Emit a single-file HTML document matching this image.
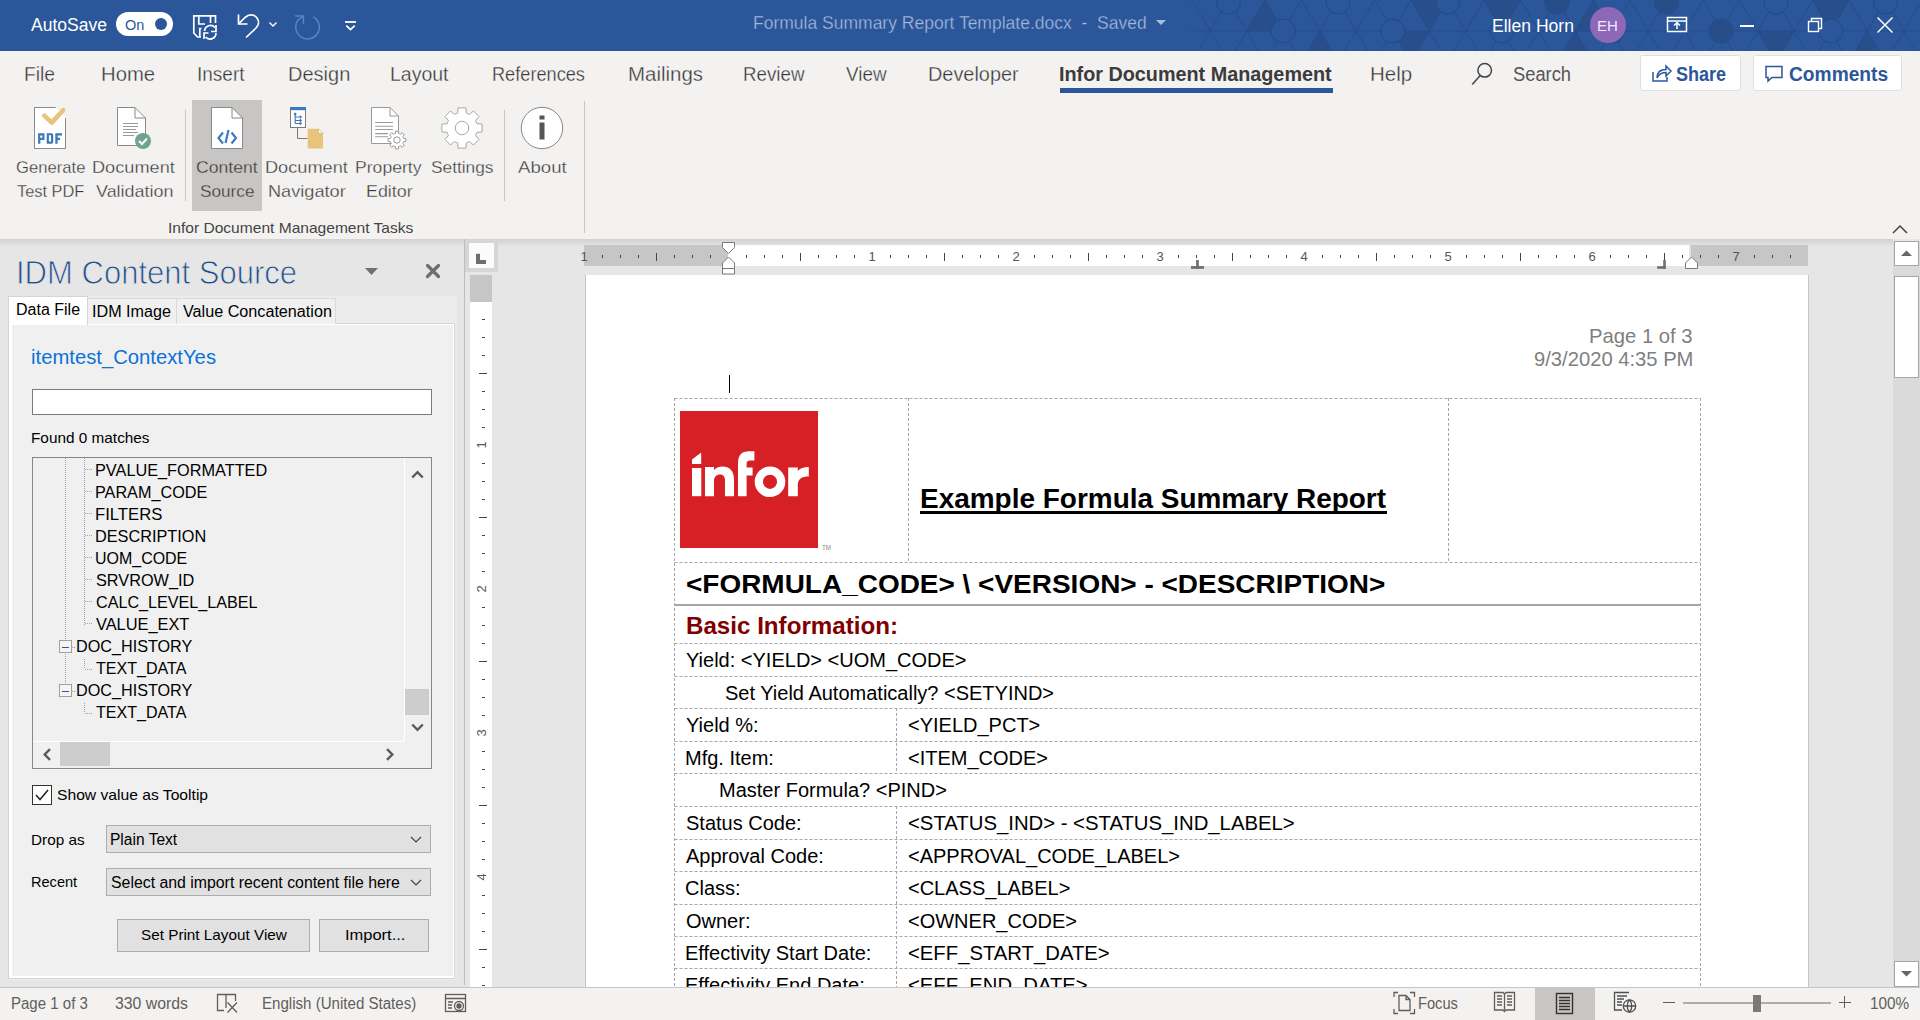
<!DOCTYPE html>
<html><head><meta charset="utf-8"><style>
html,body{margin:0;padding:0;width:1920px;height:1020px;overflow:hidden;background:#e6e6e6;font-family:'Liberation Sans',sans-serif}
.t{position:absolute;white-space:pre;line-height:1;transform-origin:0 0}
svg{overflow:visible}
</style></head><body>
<div style="position:absolute;left:0px;top:0px;width:1920px;height:51px;background:#2b579a"></div><svg style="position:absolute;left:0px;top:0px;overflow:hidden" width="1920" height="51" viewBox="0 0 1920 51"><defs><linearGradient id="fadeg" x1="0" x2="1"><stop offset="0" stop-color="#2b579a" stop-opacity="1"/><stop offset="1" stop-color="#2b579a" stop-opacity="0"/></linearGradient></defs><g fill="#284f8b"><polygon points="1246.8,31 1283.2,31 1265.0,0"/><polygon points="1301.5,62 1338.0,62 1319.8,31"/><polygon points="1392.8,31 1429.2,31 1411.0,62"/><polygon points="1411.0,0 1447.5,0 1429.2,31"/><polygon points="1484.0,0 1520.5,0 1502.2,31"/><polygon points="1757.8,31 1794.2,31 1776.0,62"/><polygon points="1812.5,0 1849.0,0 1830.8,31"/><polygon points="1849.0,62 1885.5,62 1867.2,31"/><polygon points="1575.2,31 1611.8,31 1593.5,0"/><polygon points="1557.0,62 1593.5,62 1575.2,31"/></g><path d="M1119.0 0 L1137.2 31 M1119.0 0 L1100.8 31 M1137.2 31 L1119.0 62 M1137.2 31 L1155.5 62 M1155.5 0 L1173.8 31 M1155.5 0 L1137.2 31 M1173.8 31 L1155.5 62 M1173.8 31 L1192.0 62 M1192.0 0 L1210.2 31 M1192.0 0 L1173.8 31 M1210.2 31 L1192.0 62 M1210.2 31 L1228.5 62 M1228.5 0 L1246.8 31 M1228.5 0 L1210.2 31 M1246.8 31 L1228.5 62 M1246.8 31 L1265.0 62 M1265.0 0 L1283.2 31 M1265.0 0 L1246.8 31 M1283.2 31 L1265.0 62 M1283.2 31 L1301.5 62 M1301.5 0 L1319.8 31 M1301.5 0 L1283.2 31 M1319.8 31 L1301.5 62 M1319.8 31 L1338.0 62 M1338.0 0 L1356.2 31 M1338.0 0 L1319.8 31 M1356.2 31 L1338.0 62 M1356.2 31 L1374.5 62 M1374.5 0 L1392.8 31 M1374.5 0 L1356.2 31 M1392.8 31 L1374.5 62 M1392.8 31 L1411.0 62 M1411.0 0 L1429.2 31 M1411.0 0 L1392.8 31 M1429.2 31 L1411.0 62 M1429.2 31 L1447.5 62 M1447.5 0 L1465.8 31 M1447.5 0 L1429.2 31 M1465.8 31 L1447.5 62 M1465.8 31 L1484.0 62 M1484.0 0 L1502.2 31 M1484.0 0 L1465.8 31 M1502.2 31 L1484.0 62 M1502.2 31 L1520.5 62 M1520.5 0 L1538.8 31 M1520.5 0 L1502.2 31 M1538.8 31 L1520.5 62 M1538.8 31 L1557.0 62 M1557.0 0 L1575.2 31 M1557.0 0 L1538.8 31 M1575.2 31 L1557.0 62 M1575.2 31 L1593.5 62 M1593.5 0 L1611.8 31 M1593.5 0 L1575.2 31 M1611.8 31 L1593.5 62 M1611.8 31 L1630.0 62 M1630.0 0 L1648.2 31 M1630.0 0 L1611.8 31 M1648.2 31 L1630.0 62 M1648.2 31 L1666.5 62 M1666.5 0 L1684.8 31 M1666.5 0 L1648.2 31 M1684.8 31 L1666.5 62 M1684.8 31 L1703.0 62 M1703.0 0 L1721.2 31 M1703.0 0 L1684.8 31 M1721.2 31 L1703.0 62 M1721.2 31 L1739.5 62 M1739.5 0 L1757.8 31 M1739.5 0 L1721.2 31 M1757.8 31 L1739.5 62 M1757.8 31 L1776.0 62 M1776.0 0 L1794.2 31 M1776.0 0 L1757.8 31 M1794.2 31 L1776.0 62 M1794.2 31 L1812.5 62 M1812.5 0 L1830.8 31 M1812.5 0 L1794.2 31 M1830.8 31 L1812.5 62 M1830.8 31 L1849.0 62 M1849.0 0 L1867.2 31 M1849.0 0 L1830.8 31 M1867.2 31 L1849.0 62 M1867.2 31 L1885.5 62 M1885.5 0 L1903.8 31 M1885.5 0 L1867.2 31 M1903.8 31 L1885.5 62 M1903.8 31 L1922.0 62 M1922.0 0 L1940.2 31 M1922.0 0 L1903.8 31 M1940.2 31 L1922.0 62 M1940.2 31 L1958.5 62 M1958.5 0 L1976.8 31 M1958.5 0 L1940.2 31 M1976.8 31 L1958.5 62 M1976.8 31 L1995.0 62 M1995.0 0 L2013.2 31 M1995.0 0 L1976.8 31 M2013.2 31 L1995.0 62 M2013.2 31 L2031.5 62 M2031.5 0 L2049.8 31 M2031.5 0 L2013.2 31 M2049.8 31 L2031.5 62 M2049.8 31 L2068.0 62 M1150 31 H1920" stroke="#244c8a" stroke-width="1" fill="none"/><g stroke="#244c8a" stroke-width="1"><circle cx="1228.5" cy="2" r="12" fill="#2b579a"/><circle cx="1228.5" cy="2" r="12" fill="none"/><circle cx="1283.2" cy="31" r="12" fill="#2b579a"/><circle cx="1283.2" cy="31" r="12" fill="none"/><circle cx="1338.0" cy="2" r="12" fill="#2b579a"/><circle cx="1338.0" cy="2" r="12" fill="none"/><circle cx="1392.8" cy="31" r="12" fill="#2b579a"/><circle cx="1392.8" cy="31" r="12" fill="none"/><circle cx="1447.5" cy="2" r="12" fill="#2b579a"/><circle cx="1447.5" cy="2" r="12" fill="none"/><circle cx="1502.2" cy="31" r="12" fill="#2b579a"/><circle cx="1502.2" cy="31" r="12" fill="none"/><circle cx="1557.0" cy="2" r="12" fill="#2b579a"/><circle cx="1557.0" cy="2" r="12" fill="none"/><circle cx="1611.8" cy="31" r="12" fill="#2b579a"/><circle cx="1611.8" cy="31" r="12" fill="none"/><circle cx="1666.5" cy="2" r="12" fill="#2b579a"/><circle cx="1666.5" cy="2" r="12" fill="none"/><circle cx="1721.2" cy="31" r="12" fill="#2b579a"/><circle cx="1721.2" cy="31" r="12" fill="none"/><circle cx="1776.0" cy="2" r="12" fill="#2b579a"/><circle cx="1776.0" cy="2" r="12" fill="none"/><circle cx="1830.8" cy="31" r="12" fill="#2b579a"/><circle cx="1830.8" cy="31" r="12" fill="none"/><circle cx="1885.5" cy="2" r="12" fill="#2b579a"/><circle cx="1885.5" cy="2" r="12" fill="none"/><circle cx="1940.2" cy="31" r="12" fill="#2b579a"/><circle cx="1940.2" cy="31" r="12" fill="none"/><circle cx="1995.0" cy="2" r="12" fill="#2b579a"/><circle cx="1995.0" cy="2" r="12" fill="none"/><circle cx="2049.8" cy="31" r="12" fill="#2b579a"/><circle cx="2049.8" cy="31" r="12" fill="none"/></g><circle cx="1557.0" cy="2" r="11" fill="#264d88"/><circle cx="1666.5" cy="2" r="11" fill="#264d88"/><circle cx="1721.2" cy="31" r="11" fill="#264d88"/><rect x="1180" y="0" width="25" height="51" fill="url(#fadeg)"/><rect x="0" y="0" width="1180" height="51" fill="#2b579a"/></svg><div class="t" style="left:31.00px;top:16px;font-size:18px;color:#ffffff;font-weight:400;font-family:'Liberation Sans';transform:scaleX(0.9738);">AutoSave</div><div style="position:absolute;left:116px;top:12px;width:57px;height:24px;background:#fff;border-radius:12px"></div><div class="t" style="left:125.00px;top:17px;font-size:15px;color:#2b579a;font-weight:400;font-family:'Liberation Sans';transform:scaleX(0.9661);">On</div><div style="position:absolute;left:155px;top:18px;width:12px;height:12px;border-radius:6px;background:#2b579a"></div><svg style="position:absolute;left:0px;top:0px;" width="300" height="50" viewBox="0 0 300 50"><g fill="none" stroke="#fff" stroke-width="1.7">
<path d="M215.5 23 V15.8 H193.8 V33 L197.5 37 H201"/>
<path d="M198.8 16 V24 H205"/><path d="M210.5 16 V23"/>
<path d="M199.8 37 V28.5 H201.5"/>
<path d="M204.5 31 A6 6 0 0 1 215 27.5"/><path d="M216 33 A6 6 0 0 1 205.5 37"/>
<path d="M216 25 V31.5 H211"/><path d="M204 39 V33 H208.5"/>
</g>
<g fill="none" stroke="#fff" stroke-width="1.7">
<path d="M238.5 14.5 V24 H247.5"/><path d="M238.8 23.7 L245 17.5 C249 14 254 14 257 18 C259.5 21.5 258.5 25.5 256 28 L246 37.5"/>
<path d="M269.5 22.5 L273 26 L276.5 22.5" stroke-width="1.4"/>
</g></svg><svg style="position:absolute;left:0px;top:0px;" width="400" height="50" viewBox="0 0 400 50"><g fill="none" stroke="#5b85c0" stroke-width="1.5"><path d="M313.3 16.8 A11.8 11.8 0 1 1 298.5 19.5"/><path d="M295 16 H303.4 V23.8"/><path d="M298.5 19.5 L303 16.5"/></g></svg><svg style="position:absolute;left:0px;top:0px;" width="400" height="50" viewBox="0 0 400 50"><g fill="none" stroke="#fff" stroke-width="1.8"><path d="M345 22 H356"/><path d="M346.3 25.6 L350.5 29.6 L354.7 25.6"/></g></svg><div class="t" style="left:753.03px;top:14px;font-size:18px;color:#a6bbdd;font-weight:400;font-family:'Liberation Sans';transform:scaleX(0.9724);-webkit-text-stroke:0.3px #2b579a;">Formula Summary Report Template.docx  -  Saved</div><svg style="position:absolute;left:1152px;top:16px;" width="16" height="12" viewBox="0 0 16 12"><polygon points="4,4 14,4 9,9" fill="#a9bddd"/></svg><div class="t" style="left:1492.02px;top:17px;font-size:18px;color:#ffffff;font-weight:400;font-family:'Liberation Sans';transform:scaleX(0.9752);">Ellen Horn</div><div style="position:absolute;left:1590px;top:7px;width:36px;height:36px;border-radius:18px;background:#8d67b8"></div><div class="t" style="left:1597.00px;top:18px;font-size:15px;color:#f3e8ff;font-weight:400;font-family:'Liberation Sans';">EH</div><svg style="position:absolute;left:1662px;top:12px;" width="30" height="26" viewBox="0 0 30 26"><g fill="none" stroke="#fff" stroke-width="1.5"><rect x="5.5" y="5.5" width="19" height="14"/><path d="M5.5 9 H24.5"/><path d="M15 17 V11 M12 13.5 L15 10.5 L18 13.5"/></g></svg><div style="position:absolute;left:1740px;top:25px;width:14px;height:1.5px;background:#fff"></div><svg style="position:absolute;left:1804px;top:14px;" width="24" height="22" viewBox="0 0 24 22"><g fill="none" stroke="#fff" stroke-width="1.4"><rect x="4.5" y="7.5" width="10" height="10"/><path d="M7.5 7.5 V4.5 H17.5 V14.5 H14.5"/></g></svg><svg style="position:absolute;left:1873px;top:13px;" width="24" height="24" viewBox="0 0 24 24"><g stroke="#fff" stroke-width="1.5"><path d="M4.5 4.5 L19.5 19.5 M19.5 4.5 L4.5 19.5"/></g></svg><div style="position:absolute;left:0px;top:51px;width:1920px;height:188px;background:#f3f2f1"></div><div class="t" style="left:24.04px;top:64px;font-size:20px;color:#383838;font-weight:400;font-family:'Liberation Sans';transform:scaleX(0.9645);-webkit-text-stroke:0.3px #f3f2f1;">File</div><div class="t" style="left:100.99px;top:64px;font-size:20px;color:#383838;font-weight:400;font-family:'Liberation Sans';transform:scaleX(1.0148);-webkit-text-stroke:0.3px #f3f2f1;">Home</div><div class="t" style="left:197.05px;top:64px;font-size:20px;color:#383838;font-weight:400;font-family:'Liberation Sans';transform:scaleX(0.9502);-webkit-text-stroke:0.3px #f3f2f1;">Insert</div><div class="t" style="left:288.00px;top:64px;font-size:20px;color:#383838;font-weight:400;font-family:'Liberation Sans';-webkit-text-stroke:0.3px #f3f2f1;">Design</div><div class="t" style="left:390.03px;top:64px;font-size:20px;color:#383838;font-weight:400;font-family:'Liberation Sans';transform:scaleX(0.9749);-webkit-text-stroke:0.3px #f3f2f1;">Layout</div><div class="t" style="left:492.09px;top:64px;font-size:20px;color:#383838;font-weight:400;font-family:'Liberation Sans';transform:scaleX(0.9084);-webkit-text-stroke:0.3px #f3f2f1;">References</div><div class="t" style="left:627.98px;top:64px;font-size:20px;color:#383838;font-weight:400;font-family:'Liberation Sans';transform:scaleX(1.0227);-webkit-text-stroke:0.3px #f3f2f1;">Mailings</div><div class="t" style="left:743.06px;top:64px;font-size:20px;color:#383838;font-weight:400;font-family:'Liberation Sans';transform:scaleX(0.9365);-webkit-text-stroke:0.3px #f3f2f1;">Review</div><div class="t" style="left:846.00px;top:64px;font-size:20px;color:#383838;font-weight:400;font-family:'Liberation Sans';transform:scaleX(0.9416);-webkit-text-stroke:0.3px #f3f2f1;">View</div><div class="t" style="left:928.01px;top:64px;font-size:20px;color:#383838;font-weight:400;font-family:'Liberation Sans';transform:scaleX(0.9945);-webkit-text-stroke:0.3px #f3f2f1;">Developer</div><div class="t" style="left:1369.98px;top:64px;font-size:20px;color:#383838;font-weight:400;font-family:'Liberation Sans';transform:scaleX(1.0247);-webkit-text-stroke:0.3px #f3f2f1;">Help</div><div class="t" style="left:1059.01px;top:64px;font-size:20px;color:#3b3b3b;font-weight:700;font-family:'Liberation Sans';transform:scaleX(0.9894);">Infor Document Management</div><div style="position:absolute;left:1060px;top:88px;width:273px;height:5px;background:#2b579a"></div><svg style="position:absolute;left:1466px;top:58px;" width="30" height="30" viewBox="0 0 30 30"><g fill="none" stroke="#444" stroke-width="1.5"><circle cx="18.7" cy="12.3" r="6.8"/><path d="M14.2 17.4 L6.2 26.4"/></g></svg><div class="t" style="left:1513.00px;top:64px;font-size:20px;color:#555555;font-weight:400;font-family:'Liberation Sans';transform:scaleX(0.9157);">Search</div><div style="position:absolute;left:1640px;top:55px;width:101px;height:36px;background:#fff;border:1px solid #e1dfdd;border-radius:3px;box-sizing:border-box"></div><svg style="position:absolute;left:1648px;top:60px;" width="26" height="26" viewBox="0 0 26 26"><g fill="none" stroke="#2b579a" stroke-width="1.5"><path d="M5 12 V21 H19 V17"/><path d="M9 18 C9 12 13 9.5 18 9.5 V6 L23 11 L18 16 V12.5 C14 12.5 11 14 9 18 Z"/></g></svg><div class="t" style="left:1676.00px;top:64px;font-size:20px;color:#2b579a;font-weight:700;font-family:'Liberation Sans';transform:scaleX(0.9015);">Share</div><div style="position:absolute;left:1753px;top:55px;width:149px;height:36px;background:#fff;border:1px solid #e1dfdd;border-radius:3px;box-sizing:border-box"></div><svg style="position:absolute;left:1762px;top:60px;" width="26" height="26" viewBox="0 0 26 26"><g fill="none" stroke="#2b579a" stroke-width="1.5"><path d="M4 6.5 H20 V17.5 H10 L6 21 V17.5 H4 Z"/></g></svg><div class="t" style="left:1789.00px;top:64px;font-size:20px;color:#2b579a;font-weight:700;font-family:'Liberation Sans';transform:scaleX(0.9591);">Comments</div><svg style="position:absolute;left:30px;top:103px;" width="44" height="50" viewBox="0 0 44 50"><path d="M25.5 4.5 H4.5 V45.5 H35.5 V15" fill="#fff" stroke="#8a8a8a" stroke-width="1"/><path d="M4.5 4.5 H25.5 L35.5 14.5 V45.5 H4.5 Z" fill="#fff"/><path d="M25.5 4.5 H4.5 V45.5 H35.5 V15" fill="none" stroke="#8a8a8a" stroke-width="1"/>
<path d="M14.3 12.6 L21.8 19.6 L33.1 7.2" fill="none" stroke="#e8c47a" stroke-width="4.6" stroke-linecap="round" stroke-linejoin="round"/>
<g fill="#3d78b8" fill-rule="evenodd">
<path d="M8.1 30.2 H14.5 V36.9 H10.4 V40.7 H8.1 Z M10.2 32.6 V34.8 H12.4 V32.6 Z"/>
<path d="M16.7 30.2 H22 L23.2 31.4 V39.5 L22 40.7 H16.7 Z M18.9 32.3 V38.6 H21 V32.3 Z"/>
<path d="M25.3 30.2 H32 V32.6 H27.6 V34.7 H30 V36.9 H27.6 V40.7 H25.3 Z"/>
</g></svg><div class="t" style="left:16.00px;top:159px;font-size:17px;color:#383838;font-weight:400;font-family:'Liberation Sans';transform:scaleX(0.9798);-webkit-text-stroke:0.3px #f3f2f1;">Generate</div><div class="t" style="left:17.00px;top:183px;font-size:17px;color:#383838;font-weight:400;font-family:'Liberation Sans';transform:scaleX(0.9638);-webkit-text-stroke:0.3px #f3f2f1;">Test PDF</div><svg style="position:absolute;left:114px;top:103px;" width="40" height="50" viewBox="0 0 40 50"><path d="M3.5 4.5 H21 L31.5 15 V42.5 H3.5 Z" fill="#fff" stroke="#888" stroke-width="1"/><path d="M21 4.5 V15 H31.5" fill="none" stroke="#888"/>
<g stroke="#999" stroke-width="1"><path d="M9 20.5 H24 M9 23.5 H24 M9 26.5 H22 M9 29.5 H24 M9 32.5 H20"/></g>
<circle cx="29" cy="38" r="8" fill="#6da58f"/><path d="M25 38 L28 41 L33 35.5" fill="none" stroke="#fff" stroke-width="2"/></svg><div class="t" style="left:91.93px;top:159px;font-size:17px;color:#383838;font-weight:400;font-family:'Liberation Sans';transform:scaleX(1.0683);-webkit-text-stroke:0.3px #f3f2f1;">Document</div><div class="t" style="left:96.00px;top:183px;font-size:17px;color:#383838;font-weight:400;font-family:'Liberation Sans';transform:scaleX(1.0555);-webkit-text-stroke:0.3px #f3f2f1;">Validation</div><div style="position:absolute;left:185px;top:110px;width:1px;height:91px;background:#c8c6c4"></div><div style="position:absolute;left:192px;top:100px;width:70px;height:111px;background:#c8c6c4"></div><svg style="position:absolute;left:207px;top:103px;" width="40" height="50" viewBox="0 0 40 50"><path d="M4.5 4.5 H25 L35.5 15 V45.5 H4.5 Z" fill="#fff" stroke="#888" stroke-width="1"/><path d="M25 4.5 V15 H35.5" fill="none" stroke="#888"/>
<g fill="none" stroke="#3c7bc0" stroke-width="2.2"><path d="M16 29.5 L11.5 35 L16 40.5"/><path d="M24.5 29.5 L29 35 L24.5 40.5"/><path d="M21.5 27 L18.5 40"/></g></svg><div class="t" style="left:196.00px;top:159px;font-size:17px;color:#383838;font-weight:400;font-family:'Liberation Sans';transform:scaleX(1.0365);-webkit-text-stroke:0.3px #c8c6c4;">Content</div><div class="t" style="left:200.00px;top:183px;font-size:17px;color:#383838;font-weight:400;font-family:'Liberation Sans';transform:scaleX(1.0111);-webkit-text-stroke:0.3px #c8c6c4;">Source</div><svg style="position:absolute;left:286px;top:103px;" width="42" height="50" viewBox="0 0 42 50"><rect x="4.5" y="4.5" width="15" height="20" fill="#fff" stroke="#7a7a7a"/><rect x="4" y="4" width="16" height="3.2" fill="#3d78b8"/>
<g stroke="#3d78b8" stroke-width="1.1" fill="none"><path d="M9.2 10.5 V20.5 M9.2 14 H15 M9.2 17.5 H15 M9.2 20.5 H15"/><path d="M13.8 12.8 L15.3 14 L13.8 15.2 M13.8 16.3 L15.3 17.5 L13.8 18.7 M13.8 19.3 L15.3 20.5 L13.8 21.7"/></g><circle cx="9.2" cy="11" r="1.3" fill="#3d78b8"/>
<path d="M11.5 24.5 V35.5 H21.5" fill="none" stroke="#7a7a7a"/>
<path d="M21.7 25.8 H32.5 L37 30.3 V45.5 H21.7 Z" fill="#e8c47a"/><path d="M32.5 25.8 V30.3 H37 Z" fill="#fff" stroke="#cfa95a" stroke-width="0.6"/></svg><div class="t" style="left:264.93px;top:159px;font-size:17px;color:#383838;font-weight:400;font-family:'Liberation Sans';transform:scaleX(1.0683);-webkit-text-stroke:0.3px #f3f2f1;">Document</div><div class="t" style="left:267.93px;top:183px;font-size:17px;color:#383838;font-weight:400;font-family:'Liberation Sans';transform:scaleX(1.0680);-webkit-text-stroke:0.3px #f3f2f1;">Navigator</div><svg style="position:absolute;left:366px;top:103px;" width="44" height="50" viewBox="0 0 44 50"><path d="M5.5 4.5 H24 L32.5 13 V40.5 H5.5 Z" fill="#fff" stroke="#999" stroke-width="1"/><path d="M24 4.5 V13 H32.5" fill="none" stroke="#999"/>
<g stroke="#9a9a9a" stroke-width="1.1"><path d="M9.2 19.5 H27 M9.2 23.3 H27 M9.2 26.5 H27 M9.2 30.6 H22 M9.2 33.8 H22"/></g>
<path d="M28.40 30.72 L29.48 30.37 L29.59 28.11 L32.41 28.11 L32.52 30.37 L33.60 30.72 L34.61 31.24 L36.29 29.72 L38.28 31.71 L36.76 33.39 L37.28 34.40 L37.63 35.48 L39.89 35.59 L39.89 38.41 L37.63 38.52 L37.28 39.60 L36.76 40.61 L38.28 42.29 L36.29 44.28 L34.61 42.76 L33.60 43.28 L32.52 43.63 L32.41 45.89 L29.59 45.89 L29.48 43.63 L28.40 43.28 L27.39 42.76 L25.71 44.28 L23.72 42.29 L25.24 40.61 L24.72 39.60 L24.37 38.52 L22.11 38.41 L22.11 35.59 L24.37 35.48 L24.72 34.40 L25.24 33.39 L23.72 31.71 L25.71 29.72 L27.39 31.24 Z" fill="#fff" stroke="#999" stroke-width="1" stroke-linejoin="round"/><circle cx="31" cy="37" r="3.2" fill="none" stroke="#999"/></svg><div class="t" style="left:354.96px;top:159px;font-size:17px;color:#383838;font-weight:400;font-family:'Liberation Sans';transform:scaleX(1.0353);-webkit-text-stroke:0.3px #f3f2f1;">Property</div><div class="t" style="left:365.95px;top:183px;font-size:17px;color:#383838;font-weight:400;font-family:'Liberation Sans';transform:scaleX(1.0515);-webkit-text-stroke:0.3px #f3f2f1;">Editor</div><svg style="position:absolute;left:441px;top:107px;" width="42" height="42" viewBox="0 0 42 42"><path d="M15.07 6.68 L16.72 6.10 L17.03 0.89 L24.97 0.89 L25.28 6.10 L26.93 6.68 L28.50 7.44 L32.42 3.97 L38.03 9.58 L34.56 13.50 L35.32 15.07 L35.90 16.72 L41.11 17.03 L41.11 24.97 L35.90 25.28 L35.32 26.93 L34.56 28.50 L38.03 32.42 L32.42 38.03 L28.50 34.56 L26.93 35.32 L25.28 35.90 L24.97 41.11 L17.03 41.11 L16.72 35.90 L15.07 35.32 L13.50 34.56 L9.58 38.03 L3.97 32.42 L7.44 28.50 L6.68 26.93 L6.10 25.28 L0.89 24.97 L0.89 17.03 L6.10 16.72 L6.68 15.07 L7.44 13.50 L3.97 9.58 L9.58 3.97 L13.50 7.44 Z" fill="#fff" stroke="#a8a8a8" stroke-width="1" stroke-linejoin="round"/><circle cx="21" cy="21" r="6.8" fill="none" stroke="#a8a8a8"/></svg><div class="t" style="left:431.00px;top:159px;font-size:17px;color:#383838;font-weight:400;font-family:'Liberation Sans';transform:scaleX(1.0176);-webkit-text-stroke:0.3px #f3f2f1;">Settings</div><div style="position:absolute;left:504px;top:110px;width:1px;height:91px;background:#c8c6c4"></div><svg style="position:absolute;left:520px;top:106px;" width="44" height="44" viewBox="0 0 44 44"><circle cx="22" cy="22" r="20.7" fill="#fff" stroke="#888" stroke-width="1"/><rect x="19.5" y="9.5" width="5" height="4" fill="#555"/><rect x="19.5" y="16.5" width="5" height="17" fill="#555"/></svg><div class="t" style="left:518.00px;top:159px;font-size:17px;color:#383838;font-weight:400;font-family:'Liberation Sans';transform:scaleX(1.0961);-webkit-text-stroke:0.3px #f3f2f1;">About</div><div style="position:absolute;left:584px;top:101px;width:1px;height:132px;background:#c8c6c4"></div><div class="t" style="left:167.96px;top:220px;font-size:15px;color:#444444;font-weight:400;font-family:'Liberation Sans';transform:scaleX(1.0371);">Infor Document Management Tasks</div><svg style="position:absolute;left:1886px;top:221px;" width="24" height="16" viewBox="0 0 24 16"><path d="M7 12 L14 5 L21 12" fill="none" stroke="#444" stroke-width="1.5"/></svg><div style="position:absolute;left:0;top:239px;width:1920px;height:8px;background:linear-gradient(#d2d2d2,#e6e6e6)"></div><div style="position:absolute;left:0px;top:239px;width:464px;height:748px;background:#e6e6e6"></div><div style="position:absolute;left:0;top:239px;width:464px;height:8px;background:linear-gradient(#d2d2d2,#e6e6e6)"></div><div style="position:absolute;left:464px;top:239px;width:1px;height:746px;background:#bdbdbd"></div><div class="t" style="left:16.18px;top:256px;font-size:33px;color:#1e4e8c;font-weight:400;font-family:'Liberation Sans';transform:scaleX(0.9402);-webkit-text-stroke:0.9px #e6e6e6;">IDM Content Source</div><svg style="position:absolute;left:360px;top:262px;" width="24" height="16" viewBox="0 0 24 16"><polygon points="5,6 18,6 11.5,13" fill="#707070"/></svg><svg style="position:absolute;left:420px;top:258px;" width="26" height="26" viewBox="0 0 26 26"><path d="M7.5 7.5 L18.5 18.5 M18.5 7.5 L7.5 18.5" stroke="#6e6e6e" stroke-width="3.2" stroke-linecap="round"/></svg><div style="position:absolute;left:8px;top:296px;width:449px;height:684px;background:#ececec"></div><div style="position:absolute;left:8px;top:323px;width:447px;height:656px;background:#fff;border:1px solid #d5d5d5;box-sizing:border-box"></div><div style="position:absolute;left:12px;top:325px;width:441px;height:651px;background:#f0f0f0"></div><div style="position:absolute;left:87px;top:298px;width:90px;height:26px;background:#f0f0f0;border:1px solid #d9d9d9;border-bottom:none;box-sizing:border-box"></div><div style="position:absolute;left:176px;top:298px;width:160px;height:26px;background:#f0f0f0;border:1px solid #d9d9d9;border-bottom:none;box-sizing:border-box"></div><div style="position:absolute;left:8px;top:296px;width:80px;height:29px;background:#fff;border:1px solid #d5d5d5;border-bottom:none;box-sizing:border-box"></div><div class="t" style="left:16.00px;top:302px;font-size:16px;color:#000;font-weight:400;font-family:'Liberation Sans';">Data File</div><div class="t" style="left:91.99px;top:304px;font-size:16px;color:#000;font-weight:400;font-family:'Liberation Sans';transform:scaleX(1.0085);">IDM Image</div><div class="t" style="left:183.00px;top:304px;font-size:16px;color:#000;font-weight:400;font-family:'Liberation Sans';transform:scaleX(1.0105);">Value Concatenation</div><div class="t" style="left:30.99px;top:347px;font-size:20px;color:#0b72d6;font-weight:400;font-family:'Liberation Sans';transform:scaleX(1.0127);">itemtest_ContextYes</div><div style="position:absolute;left:32px;top:389px;width:400px;height:26px;background:#fff;border:1px solid #7a7a7a;box-sizing:border-box"></div><div class="t" style="left:30.98px;top:430px;font-size:15px;color:#000;font-weight:400;font-family:'Liberation Sans';transform:scaleX(1.0227);">Found 0 matches</div><div style="position:absolute;left:32px;top:457px;width:400px;height:312px;background:#f0f0f0;border:1px solid #828790;box-sizing:border-box"></div><div class="t" style="left:95.04px;top:462px;font-size:17px;color:#000;font-weight:400;font-family:'Liberation Sans';transform:scaleX(0.9579);">PVALUE_FORMATTED</div><div class="t" style="left:95.05px;top:484px;font-size:17px;color:#000;font-weight:400;font-family:'Liberation Sans';transform:scaleX(0.9534);">PARAM_CODE</div><div class="t" style="left:95.02px;top:506px;font-size:17px;color:#000;font-weight:400;font-family:'Liberation Sans';transform:scaleX(0.9807);">FILTERS</div><div class="t" style="left:95.04px;top:528px;font-size:17px;color:#000;font-weight:400;font-family:'Liberation Sans';transform:scaleX(0.9570);">DESCRIPTION</div><div class="t" style="left:95.06px;top:550px;font-size:17px;color:#000;font-weight:400;font-family:'Liberation Sans';transform:scaleX(0.9392);">UOM_CODE</div><div class="t" style="left:96.00px;top:572px;font-size:17px;color:#000;font-weight:400;font-family:'Liberation Sans';transform:scaleX(0.9573);">SRVROW_ID</div><div class="t" style="left:96.00px;top:594px;font-size:17px;color:#000;font-weight:400;font-family:'Liberation Sans';transform:scaleX(0.9490);">CALC_LEVEL_LABEL</div><div class="t" style="left:96.00px;top:616px;font-size:17px;color:#000;font-weight:400;font-family:'Liberation Sans';transform:scaleX(0.9625);">VALUE_EXT</div><div class="t" style="left:76.05px;top:638px;font-size:17px;color:#000;font-weight:400;font-family:'Liberation Sans';transform:scaleX(0.9517);">DOC_HISTORY</div><div class="t" style="left:96.00px;top:660px;font-size:17px;color:#000;font-weight:400;font-family:'Liberation Sans';transform:scaleX(0.9442);">TEXT_DATA</div><div class="t" style="left:76.05px;top:682px;font-size:17px;color:#000;font-weight:400;font-family:'Liberation Sans';transform:scaleX(0.9517);">DOC_HISTORY</div><div class="t" style="left:96.00px;top:704px;font-size:17px;color:#000;font-weight:400;font-family:'Liberation Sans';transform:scaleX(0.9442);">TEXT_DATA</div><svg style="position:absolute;left:0px;top:0px;pointer-events:none" width="470" height="1000" viewBox="0 0 470 1000"><path d="M65.5 458 V690" stroke="#a0a0a0" stroke-dasharray="1 1"/><path d="M84.5 458 V625" stroke="#a0a0a0" stroke-dasharray="1 1"/><path d="M85 469.5 H93" stroke="#a0a0a0" stroke-dasharray="1 1"/><path d="M85 491.5 H93" stroke="#a0a0a0" stroke-dasharray="1 1"/><path d="M85 513.5 H93" stroke="#a0a0a0" stroke-dasharray="1 1"/><path d="M85 535.5 H93" stroke="#a0a0a0" stroke-dasharray="1 1"/><path d="M85 557.5 H93" stroke="#a0a0a0" stroke-dasharray="1 1"/><path d="M85 579.5 H93" stroke="#a0a0a0" stroke-dasharray="1 1"/><path d="M85 601.5 H93" stroke="#a0a0a0" stroke-dasharray="1 1"/><path d="M85 623.5 H93" stroke="#a0a0a0" stroke-dasharray="1 1"/><path d="M84.5 659 V669" stroke="#a0a0a0" stroke-dasharray="1 1"/><path d="M85 669.5 H93" stroke="#a0a0a0" stroke-dasharray="1 1"/><path d="M84.5 703 V713" stroke="#a0a0a0" stroke-dasharray="1 1"/><path d="M85 713.5 H93" stroke="#a0a0a0" stroke-dasharray="1 1"/><path d="M72 647.5 H76" stroke="#a0a0a0" stroke-dasharray="1 1"/><rect x="59.5" y="640.5" width="12" height="12" fill="#f4f4f4" stroke="#a0a0a0"/><path d="M62 647.5 H69" stroke="#3556a0" stroke-width="1"/><path d="M72 691.5 H76" stroke="#a0a0a0" stroke-dasharray="1 1"/><rect x="59.5" y="684.5" width="12" height="12" fill="#f4f4f4" stroke="#a0a0a0"/><path d="M62 691.5 H69" stroke="#3556a0" stroke-width="1"/></svg><div style="position:absolute;left:404px;top:458px;width:27px;height:283px;background:#f0f0f0"></div><div style="position:absolute;left:405px;top:689px;width:24px;height:26px;background:#cdcdcd"></div><svg style="position:absolute;left:404px;top:460px;" width="27" height="280" viewBox="0 0 27 280"><path d="M8.2 17.5 L13.5 12.2 L18.8 17.5" fill="none" stroke="#5a5a5a" stroke-width="2.4"/><path d="M8.2 264.5 L13.5 269.8 L18.8 264.5" fill="none" stroke="#5a5a5a" stroke-width="2.4"/></svg><div style="position:absolute;left:33px;top:741px;width:371px;height:27px;background:#f0f0f0"></div><div style="position:absolute;left:60px;top:742px;width:50px;height:24px;background:#cdcdcd"></div><svg style="position:absolute;left:33px;top:741px;" width="371" height="27" viewBox="0 0 371 27"><path d="M17 8.2 L11.7 13.5 L17 18.8" fill="none" stroke="#5a5a5a" stroke-width="2.4"/><path d="M354 8.2 L359.3 13.5 L354 18.8" fill="none" stroke="#5a5a5a" stroke-width="2.4"/></svg><div style="position:absolute;left:33px;top:741px;width:371px;height:1px;background:#fff"></div><div style="position:absolute;left:404px;top:458px;width:1px;height:284px;background:#fff"></div><div style="position:absolute;left:404px;top:741px;width:27px;height:27px;background:#f0f0f0"></div><div style="position:absolute;left:32px;top:785px;width:20px;height:20px;background:#fff;border:1px solid #333;box-sizing:border-box"></div><svg style="position:absolute;left:32px;top:785px;" width="20" height="20" viewBox="0 0 20 20"><path d="M4 10 L8 14.5 L16 5" fill="none" stroke="#222" stroke-width="1.5"/></svg><div class="t" style="left:57.00px;top:787px;font-size:15px;color:#000;font-weight:400;font-family:'Liberation Sans';transform:scaleX(1.0432);">Show value as Tooltip</div><div class="t" style="left:30.98px;top:832px;font-size:15px;color:#000;font-weight:400;font-family:'Liberation Sans';transform:scaleX(1.0192);">Drop as</div><div style="position:absolute;left:106px;top:825px;width:325px;height:28px;background:#e1e1e1;border:1px solid #adadad;box-sizing:border-box"></div><div class="t" style="left:110.03px;top:832px;font-size:16px;color:#000;font-weight:400;font-family:'Liberation Sans';transform:scaleX(0.9721);">Plain Text</div><svg style="position:absolute;left:406px;top:831px;" width="20" height="16" viewBox="0 0 20 16"><path d="M5 6 L10 11 L15 6" fill="none" stroke="#444" stroke-width="1.2"/></svg><div class="t" style="left:31.03px;top:874px;font-size:15px;color:#000;font-weight:400;font-family:'Liberation Sans';transform:scaleX(0.9713);">Recent</div><div style="position:absolute;left:106px;top:868px;width:325px;height:28px;background:#e1e1e1;border:1px solid #adadad;box-sizing:border-box"></div><div class="t" style="left:111.00px;top:875px;font-size:16px;color:#000;font-weight:400;font-family:'Liberation Sans';transform:scaleX(0.9903);">Select and import recent content file here</div><svg style="position:absolute;left:406px;top:874px;" width="20" height="16" viewBox="0 0 20 16"><path d="M5 6 L10 11 L15 6" fill="none" stroke="#444" stroke-width="1.2"/></svg><div style="position:absolute;left:117px;top:919px;width:193px;height:33px;background:#e1e1e1;border:1px solid #adadad;box-sizing:border-box"></div><div class="t" style="left:141.00px;top:927px;font-size:15px;color:#000;font-weight:400;font-family:'Liberation Sans';transform:scaleX(1.0188);">Set Print Layout View</div><div style="position:absolute;left:319px;top:919px;width:110px;height:33px;background:#e1e1e1;border:1px solid #adadad;box-sizing:border-box"></div><div class="t" style="left:344.90px;top:927px;font-size:15px;color:#000;font-weight:400;font-family:'Liberation Sans';transform:scaleX(1.0976);">Import...</div><div style="position:absolute;left:465px;top:240px;width:33px;height:32px;background:#d6d6d6"></div><div style="position:absolute;left:469px;top:243px;width:25px;height:25px;background:#fbfbfb"></div><svg style="position:absolute;left:469px;top:243px;" width="25" height="25" viewBox="0 0 25 25"><path d="M9 10.8 V19 H17" fill="none" stroke="#6e6e6e" stroke-width="4" stroke-linejoin="miter"/></svg><div style="position:absolute;left:584px;top:245px;width:1224px;height:21px;background:#ffffff"></div><div style="position:absolute;left:584px;top:245px;width:144px;height:21px;background:#c6c6c6"></div><div style="position:absolute;left:1689px;top:245px;width:119px;height:21px;background:#e3e3e3"></div><div style="position:absolute;left:1691px;top:245px;width:117px;height:21px;background:#c6c6c6"></div><svg style="position:absolute;left:0px;top:0px;pointer-events:none" width="1920" height="280" viewBox="0 0 1920 280"><rect x="602" y="255" width="1" height="3" fill="#444"/><rect x="620" y="255" width="1" height="3" fill="#444"/><rect x="638" y="255" width="1" height="3" fill="#444"/><rect x="656" y="253" width="1" height="8" fill="#444"/><rect x="674" y="255" width="1" height="3" fill="#444"/><rect x="692" y="255" width="1" height="3" fill="#444"/><rect x="710" y="255" width="1" height="3" fill="#444"/><rect x="746" y="255" width="1" height="3" fill="#444"/><rect x="764" y="255" width="1" height="3" fill="#444"/><rect x="782" y="255" width="1" height="3" fill="#444"/><rect x="800" y="253" width="1" height="8" fill="#444"/><rect x="818" y="255" width="1" height="3" fill="#444"/><rect x="836" y="255" width="1" height="3" fill="#444"/><rect x="854" y="255" width="1" height="3" fill="#444"/><text x="872" y="261" font-family="Liberation Sans" font-size="13" fill="#555" text-anchor="middle">1</text><rect x="890" y="255" width="1" height="3" fill="#444"/><rect x="908" y="255" width="1" height="3" fill="#444"/><rect x="926" y="255" width="1" height="3" fill="#444"/><rect x="944" y="253" width="1" height="8" fill="#444"/><rect x="962" y="255" width="1" height="3" fill="#444"/><rect x="980" y="255" width="1" height="3" fill="#444"/><rect x="998" y="255" width="1" height="3" fill="#444"/><text x="1016" y="261" font-family="Liberation Sans" font-size="13" fill="#555" text-anchor="middle">2</text><rect x="1034" y="255" width="1" height="3" fill="#444"/><rect x="1052" y="255" width="1" height="3" fill="#444"/><rect x="1070" y="255" width="1" height="3" fill="#444"/><rect x="1088" y="253" width="1" height="8" fill="#444"/><rect x="1106" y="255" width="1" height="3" fill="#444"/><rect x="1124" y="255" width="1" height="3" fill="#444"/><rect x="1142" y="255" width="1" height="3" fill="#444"/><text x="1160" y="261" font-family="Liberation Sans" font-size="13" fill="#555" text-anchor="middle">3</text><rect x="1178" y="255" width="1" height="3" fill="#444"/><rect x="1196" y="255" width="1" height="3" fill="#444"/><rect x="1214" y="255" width="1" height="3" fill="#444"/><rect x="1232" y="253" width="1" height="8" fill="#444"/><rect x="1250" y="255" width="1" height="3" fill="#444"/><rect x="1268" y="255" width="1" height="3" fill="#444"/><rect x="1286" y="255" width="1" height="3" fill="#444"/><text x="1304" y="261" font-family="Liberation Sans" font-size="13" fill="#555" text-anchor="middle">4</text><rect x="1322" y="255" width="1" height="3" fill="#444"/><rect x="1340" y="255" width="1" height="3" fill="#444"/><rect x="1358" y="255" width="1" height="3" fill="#444"/><rect x="1376" y="253" width="1" height="8" fill="#444"/><rect x="1394" y="255" width="1" height="3" fill="#444"/><rect x="1412" y="255" width="1" height="3" fill="#444"/><rect x="1430" y="255" width="1" height="3" fill="#444"/><text x="1448" y="261" font-family="Liberation Sans" font-size="13" fill="#555" text-anchor="middle">5</text><rect x="1466" y="255" width="1" height="3" fill="#444"/><rect x="1484" y="255" width="1" height="3" fill="#444"/><rect x="1502" y="255" width="1" height="3" fill="#444"/><rect x="1520" y="253" width="1" height="8" fill="#444"/><rect x="1538" y="255" width="1" height="3" fill="#444"/><rect x="1556" y="255" width="1" height="3" fill="#444"/><rect x="1574" y="255" width="1" height="3" fill="#444"/><text x="1592" y="261" font-family="Liberation Sans" font-size="13" fill="#555" text-anchor="middle">6</text><rect x="1610" y="255" width="1" height="3" fill="#444"/><rect x="1628" y="255" width="1" height="3" fill="#444"/><rect x="1646" y="255" width="1" height="3" fill="#444"/><rect x="1664" y="253" width="1" height="8" fill="#444"/><rect x="1682" y="255" width="1" height="3" fill="#444"/><rect x="1700" y="255" width="1" height="3" fill="#444"/><rect x="1718" y="255" width="1" height="3" fill="#444"/><text x="1736" y="261" font-family="Liberation Sans" font-size="13" fill="#555" text-anchor="middle">7</text><rect x="1754" y="255" width="1" height="3" fill="#444"/><rect x="1772" y="255" width="1" height="3" fill="#444"/><rect x="1790" y="255" width="1" height="3" fill="#444"/><text x="584" y="261" font-family="Liberation Sans" font-size="13" fill="#555" text-anchor="middle">1</text><path d="M722.5 242.5 H734.5 V247.5 L728.5 253.5 L722.5 247.5 Z" fill="#fff" stroke="#7a7a7a" stroke-linejoin="miter"/><path d="M728.5 257 L734.5 263 V274 H722.5 V263 Z" fill="#fff" stroke="#7a7a7a" stroke-linejoin="miter"/><path d="M722.5 268.5 H734.5" stroke="#7a7a7a"/><path d="M1691.5 257 L1697.5 263 V268.5 H1685.5 V263 Z" fill="#fff" stroke="#7a7a7a" stroke-linejoin="miter"/><rect x="1663.2" y="260" width="2.6" height="9" fill="#6f6f6f"/><rect x="1657.2" y="266.2" width="8.6" height="2.6" fill="#6f6f6f"/><rect x="1196.1" y="260" width="2.7" height="8.8" fill="#6f6f6f"/><rect x="1191" y="266.1" width="13" height="2.7" fill="#6f6f6f"/></svg><div style="position:absolute;left:470px;top:275px;width:22px;height:712px;background:#ffffff"></div><div style="position:absolute;left:470px;top:275px;width:22px;height:27px;background:#c6c6c6"></div><svg style="position:absolute;left:0px;top:0px;pointer-events:none" width="1920" height="1000" viewBox="0 0 1920 1000"><rect x="482" y="319" width="3" height="1" fill="#444"/><rect x="482" y="337" width="3" height="1" fill="#444"/><rect x="482" y="355" width="3" height="1" fill="#444"/><rect x="479" y="373" width="8" height="1" fill="#444"/><rect x="482" y="391" width="3" height="1" fill="#444"/><rect x="482" y="409" width="3" height="1" fill="#444"/><rect x="482" y="427" width="3" height="1" fill="#444"/><text x="0" y="0" transform="translate(486,445) rotate(-90)" font-family="Liberation Sans" font-size="13" fill="#555" text-anchor="middle">1</text><rect x="482" y="463" width="3" height="1" fill="#444"/><rect x="482" y="481" width="3" height="1" fill="#444"/><rect x="482" y="499" width="3" height="1" fill="#444"/><rect x="479" y="517" width="8" height="1" fill="#444"/><rect x="482" y="535" width="3" height="1" fill="#444"/><rect x="482" y="553" width="3" height="1" fill="#444"/><rect x="482" y="571" width="3" height="1" fill="#444"/><text x="0" y="0" transform="translate(486,589) rotate(-90)" font-family="Liberation Sans" font-size="13" fill="#555" text-anchor="middle">2</text><rect x="482" y="607" width="3" height="1" fill="#444"/><rect x="482" y="625" width="3" height="1" fill="#444"/><rect x="482" y="643" width="3" height="1" fill="#444"/><rect x="479" y="661" width="8" height="1" fill="#444"/><rect x="482" y="679" width="3" height="1" fill="#444"/><rect x="482" y="697" width="3" height="1" fill="#444"/><rect x="482" y="715" width="3" height="1" fill="#444"/><text x="0" y="0" transform="translate(486,733) rotate(-90)" font-family="Liberation Sans" font-size="13" fill="#555" text-anchor="middle">3</text><rect x="482" y="751" width="3" height="1" fill="#444"/><rect x="482" y="769" width="3" height="1" fill="#444"/><rect x="482" y="787" width="3" height="1" fill="#444"/><rect x="479" y="805" width="8" height="1" fill="#444"/><rect x="482" y="823" width="3" height="1" fill="#444"/><rect x="482" y="841" width="3" height="1" fill="#444"/><rect x="482" y="859" width="3" height="1" fill="#444"/><text x="0" y="0" transform="translate(486,877) rotate(-90)" font-family="Liberation Sans" font-size="13" fill="#555" text-anchor="middle">4</text><rect x="482" y="895" width="3" height="1" fill="#444"/><rect x="482" y="913" width="3" height="1" fill="#444"/><rect x="482" y="931" width="3" height="1" fill="#444"/><rect x="479" y="949" width="8" height="1" fill="#444"/><rect x="482" y="967" width="3" height="1" fill="#444"/><rect x="482" y="985" width="3" height="1" fill="#444"/></svg><div style="position:absolute;left:492px;top:272px;width:1px;height:715px;background:#e6e6e6"></div><div style="position:absolute;left:585px;top:275px;width:1224px;height:712px;background:#fff;border-left:1px solid #c6c6c6;border-right:1px solid #c6c6c6;box-sizing:border-box"></div><div class="t" style="left:1589.04px;top:325px;font-size:21px;color:#7f7f7f;font-weight:400;font-family:'Liberation Sans';transform:scaleX(0.9646);">Page 1 of 3</div><div class="t" style="left:1534.00px;top:348px;font-size:21px;color:#7f7f7f;font-weight:400;font-family:'Liberation Sans';transform:scaleX(0.9617);">9/3/2020 4:35 PM</div><div style="position:absolute;left:729px;top:375px;width:1px;height:18px;background:#000"></div><svg style="position:absolute;left:0px;top:0px;pointer-events:none" width="1920" height="1000" viewBox="0 0 1920 1000"><path d="M674.5 398.5 H1700.5" stroke="#a6a6a6" stroke-width="1" stroke-dasharray="3 2"/><path d="M674.5 562.5 H1700.5" stroke="#a6a6a6" stroke-width="1" stroke-dasharray="3 2"/><path d="M674.5 643.5 H1700.5" stroke="#a6a6a6" stroke-width="1" stroke-dasharray="3 2"/><path d="M674.5 676.5 H1700.5" stroke="#a6a6a6" stroke-width="1" stroke-dasharray="3 2"/><path d="M674.5 708.5 H1700.5" stroke="#a6a6a6" stroke-width="1" stroke-dasharray="3 2"/><path d="M674.5 741.5 H1700.5" stroke="#a6a6a6" stroke-width="1" stroke-dasharray="3 2"/><path d="M674.5 773.5 H1700.5" stroke="#a6a6a6" stroke-width="1" stroke-dasharray="3 2"/><path d="M674.5 806.5 H1700.5" stroke="#a6a6a6" stroke-width="1" stroke-dasharray="3 2"/><path d="M674.5 839.5 H1700.5" stroke="#a6a6a6" stroke-width="1" stroke-dasharray="3 2"/><path d="M674.5 871.5 H1700.5" stroke="#a6a6a6" stroke-width="1" stroke-dasharray="3 2"/><path d="M674.5 904.5 H1700.5" stroke="#a6a6a6" stroke-width="1" stroke-dasharray="3 2"/><path d="M674.5 936.5 H1700.5" stroke="#a6a6a6" stroke-width="1" stroke-dasharray="3 2"/><path d="M674.5 968.5 H1700.5" stroke="#a6a6a6" stroke-width="1" stroke-dasharray="3 2"/><path d="M674.5 605 H1700.5" stroke="#a6a6a6" stroke-width="2"/><path d="M674.5 398 V987" stroke="#a6a6a6" stroke-width="1" stroke-dasharray="3 2"/><path d="M1700.5 398 V987" stroke="#a6a6a6" stroke-width="1" stroke-dasharray="3 2"/><path d="M908.5 398 V562" stroke="#a6a6a6" stroke-width="1" stroke-dasharray="3 2"/><path d="M1448.5 398 V562" stroke="#a6a6a6" stroke-width="1" stroke-dasharray="3 2"/><path d="M896.5 708 V773" stroke="#a6a6a6" stroke-width="1" stroke-dasharray="3 2"/><path d="M896.5 806 V987" stroke="#a6a6a6" stroke-width="1" stroke-dasharray="3 2"/></svg><div style="position:absolute;left:680px;top:411px;width:138px;height:137px;background:#d71f26"></div><svg style="position:absolute;left:0px;top:0px;" width="900" height="600" viewBox="0 0 900 600"><g fill="#fff">
<rect x="692" y="468" width="9.3" height="28.2"/>
<polygon points="692,464 692,459.5 701.2,452.5 701.2,464"/>
<path d="M705 496.2 V467 H714 V470 C716 467.5 719.5 466.5 722.5 466.5 C729.5 466.5 734 471 734 479 V496.2 H725 V480.5 C725 476.5 723 474.5 720 474.5 C716.5 474.5 714 477 714 481 V496.2 Z"/>
<path d="M738 496.2 V463 C738 455 742 451.3 749 451.3 H754.4 V460.5 H750 C748 460.5 746.6 461.5 746.6 463.5 V467.6 H752.6 V475.5 H746.6 V496.2 Z"/>
<path d="M788.2 496.2 V467.5 H797.8 V471 C800 468.5 803.5 467 808.8 467 V476.5 C801.5 476.5 797.8 479 797.8 485 V496.2 Z"/>
</g><circle cx="770" cy="481.8" r="11.2" fill="none" stroke="#fff" stroke-width="8.2"/></svg><div class="t" style="left:822.00px;top:544px;font-size:7px;color:#888;font-weight:400;font-family:'Liberation Sans';transform:scaleX(0.8758);">TM</div><div class="t" style="left:919.96px;top:486px;font-size:27px;color:#000;font-weight:700;font-family:'Liberation Sans';transform:scaleX(1.0353);">Example Formula Summary Report</div><div style="position:absolute;left:920px;top:511px;width:467px;height:3px;background:#000"></div><div class="t" style="left:685.92px;top:571px;font-size:26px;color:#000;font-weight:700;font-family:'Liberation Sans';transform:scaleX(1.0756);">&lt;FORMULA_CODE&gt; \ &lt;VERSION&gt; - &lt;DESCRIPTION&gt;</div><div class="t" style="left:685.99px;top:614px;font-size:24px;color:#800000;font-weight:700;font-family:'Liberation Sans';transform:scaleX(1.0063);">Basic Information:</div><div class="t" style="left:686.00px;top:650px;font-size:20px;color:#000;font-weight:400;font-family:'Liberation Sans';">Yield: &lt;YIELD&gt; &lt;UOM_CODE&gt;</div><div class="t" style="left:725.00px;top:683px;font-size:20px;color:#000;font-weight:400;font-family:'Liberation Sans';">Set Yield Automatically? &lt;SETYIND&gt;</div><div class="t" style="left:686.00px;top:715px;font-size:20px;color:#000;font-weight:400;font-family:'Liberation Sans';">Yield %:</div><div class="t" style="left:908.00px;top:715px;font-size:20px;color:#000;font-weight:400;font-family:'Liberation Sans';">&lt;YIELD_PCT&gt;</div><div class="t" style="left:685.00px;top:748px;font-size:20px;color:#000;font-weight:400;font-family:'Liberation Sans';">Mfg. Item:</div><div class="t" style="left:908.00px;top:748px;font-size:20px;color:#000;font-weight:400;font-family:'Liberation Sans';">&lt;ITEM_CODE&gt;</div><div class="t" style="left:719.00px;top:780px;font-size:20px;color:#000;font-weight:400;font-family:'Liberation Sans';">Master Formula? &lt;PIND&gt;</div><div class="t" style="left:686.00px;top:813px;font-size:20px;color:#000;font-weight:400;font-family:'Liberation Sans';">Status Code:</div><div class="t" style="left:908.00px;top:813px;font-size:20px;color:#000;font-weight:400;font-family:'Liberation Sans';transform:scaleX(1.0153);">&lt;STATUS_IND&gt; - &lt;STATUS_IND_LABEL&gt;</div><div class="t" style="left:686.00px;top:846px;font-size:20px;color:#000;font-weight:400;font-family:'Liberation Sans';">Approval Code:</div><div class="t" style="left:908.00px;top:846px;font-size:20px;color:#000;font-weight:400;font-family:'Liberation Sans';">&lt;APPROVAL_CODE_LABEL&gt;</div><div class="t" style="left:685.00px;top:878px;font-size:20px;color:#000;font-weight:400;font-family:'Liberation Sans';">Class:</div><div class="t" style="left:908.00px;top:878px;font-size:20px;color:#000;font-weight:400;font-family:'Liberation Sans';">&lt;CLASS_LABEL&gt;</div><div class="t" style="left:686.00px;top:911px;font-size:20px;color:#000;font-weight:400;font-family:'Liberation Sans';">Owner:</div><div class="t" style="left:908.00px;top:911px;font-size:20px;color:#000;font-weight:400;font-family:'Liberation Sans';">&lt;OWNER_CODE&gt;</div><div class="t" style="left:685.00px;top:943px;font-size:20px;color:#000;font-weight:400;font-family:'Liberation Sans';">Effectivity Start Date:</div><div class="t" style="left:908.00px;top:943px;font-size:20px;color:#000;font-weight:400;font-family:'Liberation Sans';transform:scaleX(1.0138);">&lt;EFF_START_DATE&gt;</div><div class="t" style="left:685.00px;top:975px;font-size:20px;color:#000;font-weight:400;font-family:'Liberation Sans';">Effectivity End Date:</div><div class="t" style="left:908.00px;top:975px;font-size:20px;color:#000;font-weight:400;font-family:'Liberation Sans';transform:scaleX(1.0126);">&lt;EFF_END_DATE&gt;</div><div style="position:absolute;left:1893px;top:239px;width:27px;height:748px;background:#dadada"></div><div style="position:absolute;left:1893px;top:239px;width:27px;height:2px;background:#e6e6e6"></div><div style="position:absolute;left:1894px;top:241px;width:25px;height:25px;background:#fff;border:1px solid #a6a6a6;box-sizing:border-box"></div><svg style="position:absolute;left:1894px;top:241px;" width="25" height="25" viewBox="0 0 25 25"><polygon points="7,15 18,15 12.5,9.5" fill="#666"/></svg><div style="position:absolute;left:1894px;top:276px;width:25px;height:102px;background:#fff;border:1px solid #a6a6a6;box-sizing:border-box"></div><div style="position:absolute;left:1894px;top:961px;width:25px;height:26px;background:#fff;border:1px solid #a6a6a6;box-sizing:border-box"></div><svg style="position:absolute;left:1894px;top:961px;" width="25" height="26" viewBox="0 0 25 26"><polygon points="7,10 18,10 12.5,15.5" fill="#666"/></svg><div style="position:absolute;left:0px;top:987px;width:1920px;height:33px;background:#f3f2f1"></div><div style="position:absolute;left:0px;top:987px;width:1920px;height:1px;background:#c8c6c4"></div><div class="t" style="left:11.06px;top:996px;font-size:16px;color:#605e5c;font-weight:400;font-family:'Liberation Sans';transform:scaleX(0.9389);">Page 1 of 3</div><div class="t" style="left:115.00px;top:996px;font-size:16px;color:#605e5c;font-weight:400;font-family:'Liberation Sans';transform:scaleX(0.9889);">330 words</div><svg style="position:absolute;left:0px;top:0px;" width="480" height="1020" viewBox="0 0 480 1020"><g fill="none" stroke="#605e5c" stroke-width="1.3"><path d="M235.5 1001 V994.5 H217.5 V1010.5 H224"/><path d="M226 994.5 V1008"/><path d="M227.5 1002.5 L237 1012.5 M237 1002.5 L227.5 1012.5"/></g></svg><div class="t" style="left:262.06px;top:996px;font-size:16px;color:#605e5c;font-weight:400;font-family:'Liberation Sans';transform:scaleX(0.9427);">English (United States)</div><svg style="position:absolute;left:442px;top:990px;" width="28" height="28" viewBox="0 0 28 28"><g fill="none" stroke="#605e5c" stroke-width="1.3"><rect x="3.5" y="4.5" width="20" height="17"/><path d="M3.5 8.5 H23.5 M6 12 H11 M6 15 H10 M6 18 H10"/><circle cx="17" cy="16" r="4.5"/><circle cx="17" cy="16" r="2" fill="#605e5c"/></g></svg><svg style="position:absolute;left:1390px;top:989px;" width="30" height="28" viewBox="0 0 30 28"><g fill="none" stroke="#605e5c" stroke-width="1.3"><path d="M4 8 V3.5 H8 M20 3.5 H24.5 V8 M4 20 V24.5 H8 M24.5 20 V24.5 H20"/><path d="M9 6.5 H16 L20 10.5 V21.5 H9 Z M16 6.5 V10.5 H20"/></g></svg><div class="t" style="left:1418.08px;top:996px;font-size:16px;color:#605e5c;font-weight:400;font-family:'Liberation Sans';transform:scaleX(0.9161);">Focus</div><svg style="position:absolute;left:1490px;top:987px;" width="30" height="28" viewBox="0 0 30 28"><g fill="none" stroke="#605e5c" stroke-width="1.3"><path d="M4.5 5.5 H13 L14.5 7 L16 5.5 H24.5 V23 H16 L14.5 24.5 L13 23 H4.5 Z"/><path d="M14.5 7 V23"/><path d="M7 9 H12 M7 12 H12 M7 15 H12 M7 18 H12 M17 9 H22 M17 12 H22 M17 15 H22 M17 18 H22"/></g></svg><div style="position:absolute;left:1535px;top:987px;width:60px;height:33px;background:#c8c6c4"></div><svg style="position:absolute;left:1550px;top:989px;" width="30" height="28" viewBox="0 0 30 28"><g fill="none" stroke="#323130" stroke-width="1.4"><rect x="6.5" y="4.5" width="16" height="20"/><path d="M9 8.5 H20 M9 11.5 H20 M9 14.5 H20 M9 17.5 H20 M9 20.5 H20"/></g></svg><svg style="position:absolute;left:1610px;top:987px;" width="32" height="28" viewBox="0 0 32 28"><g fill="none" stroke="#505050" stroke-width="1.3"><path d="M19 5.5 H4.5 V23 H12"/><path d="M7 9 H17 M7 12 H14 M7 15 H12 M7 18 H12"/><circle cx="19.5" cy="19" r="6.2"/><path d="M13.3 19 H25.7 M19.5 12.8 C16.5 16 16.5 22 19.5 25.2 C22.5 22 22.5 16 19.5 12.8"/></g></svg><div style="position:absolute;left:1663px;top:1002px;width:12px;height:1.3px;background:#605e5c"></div><div style="position:absolute;left:1683px;top:1002px;width:148px;height:2px;background:#adadad"></div><div style="position:absolute;left:1753px;top:995px;width:8px;height:17px;background:#7a7977"></div><div style="position:absolute;left:1839px;top:1002px;width:12px;height:1.3px;background:#605e5c"></div><div style="position:absolute;left:1844px;top:996px;width:1.3px;height:12px;background:#605e5c"></div><div class="t" style="left:1870.04px;top:996px;font-size:16px;color:#605e5c;font-weight:400;font-family:'Liberation Sans';transform:scaleX(0.9573);">100%</div>
</body></html>
